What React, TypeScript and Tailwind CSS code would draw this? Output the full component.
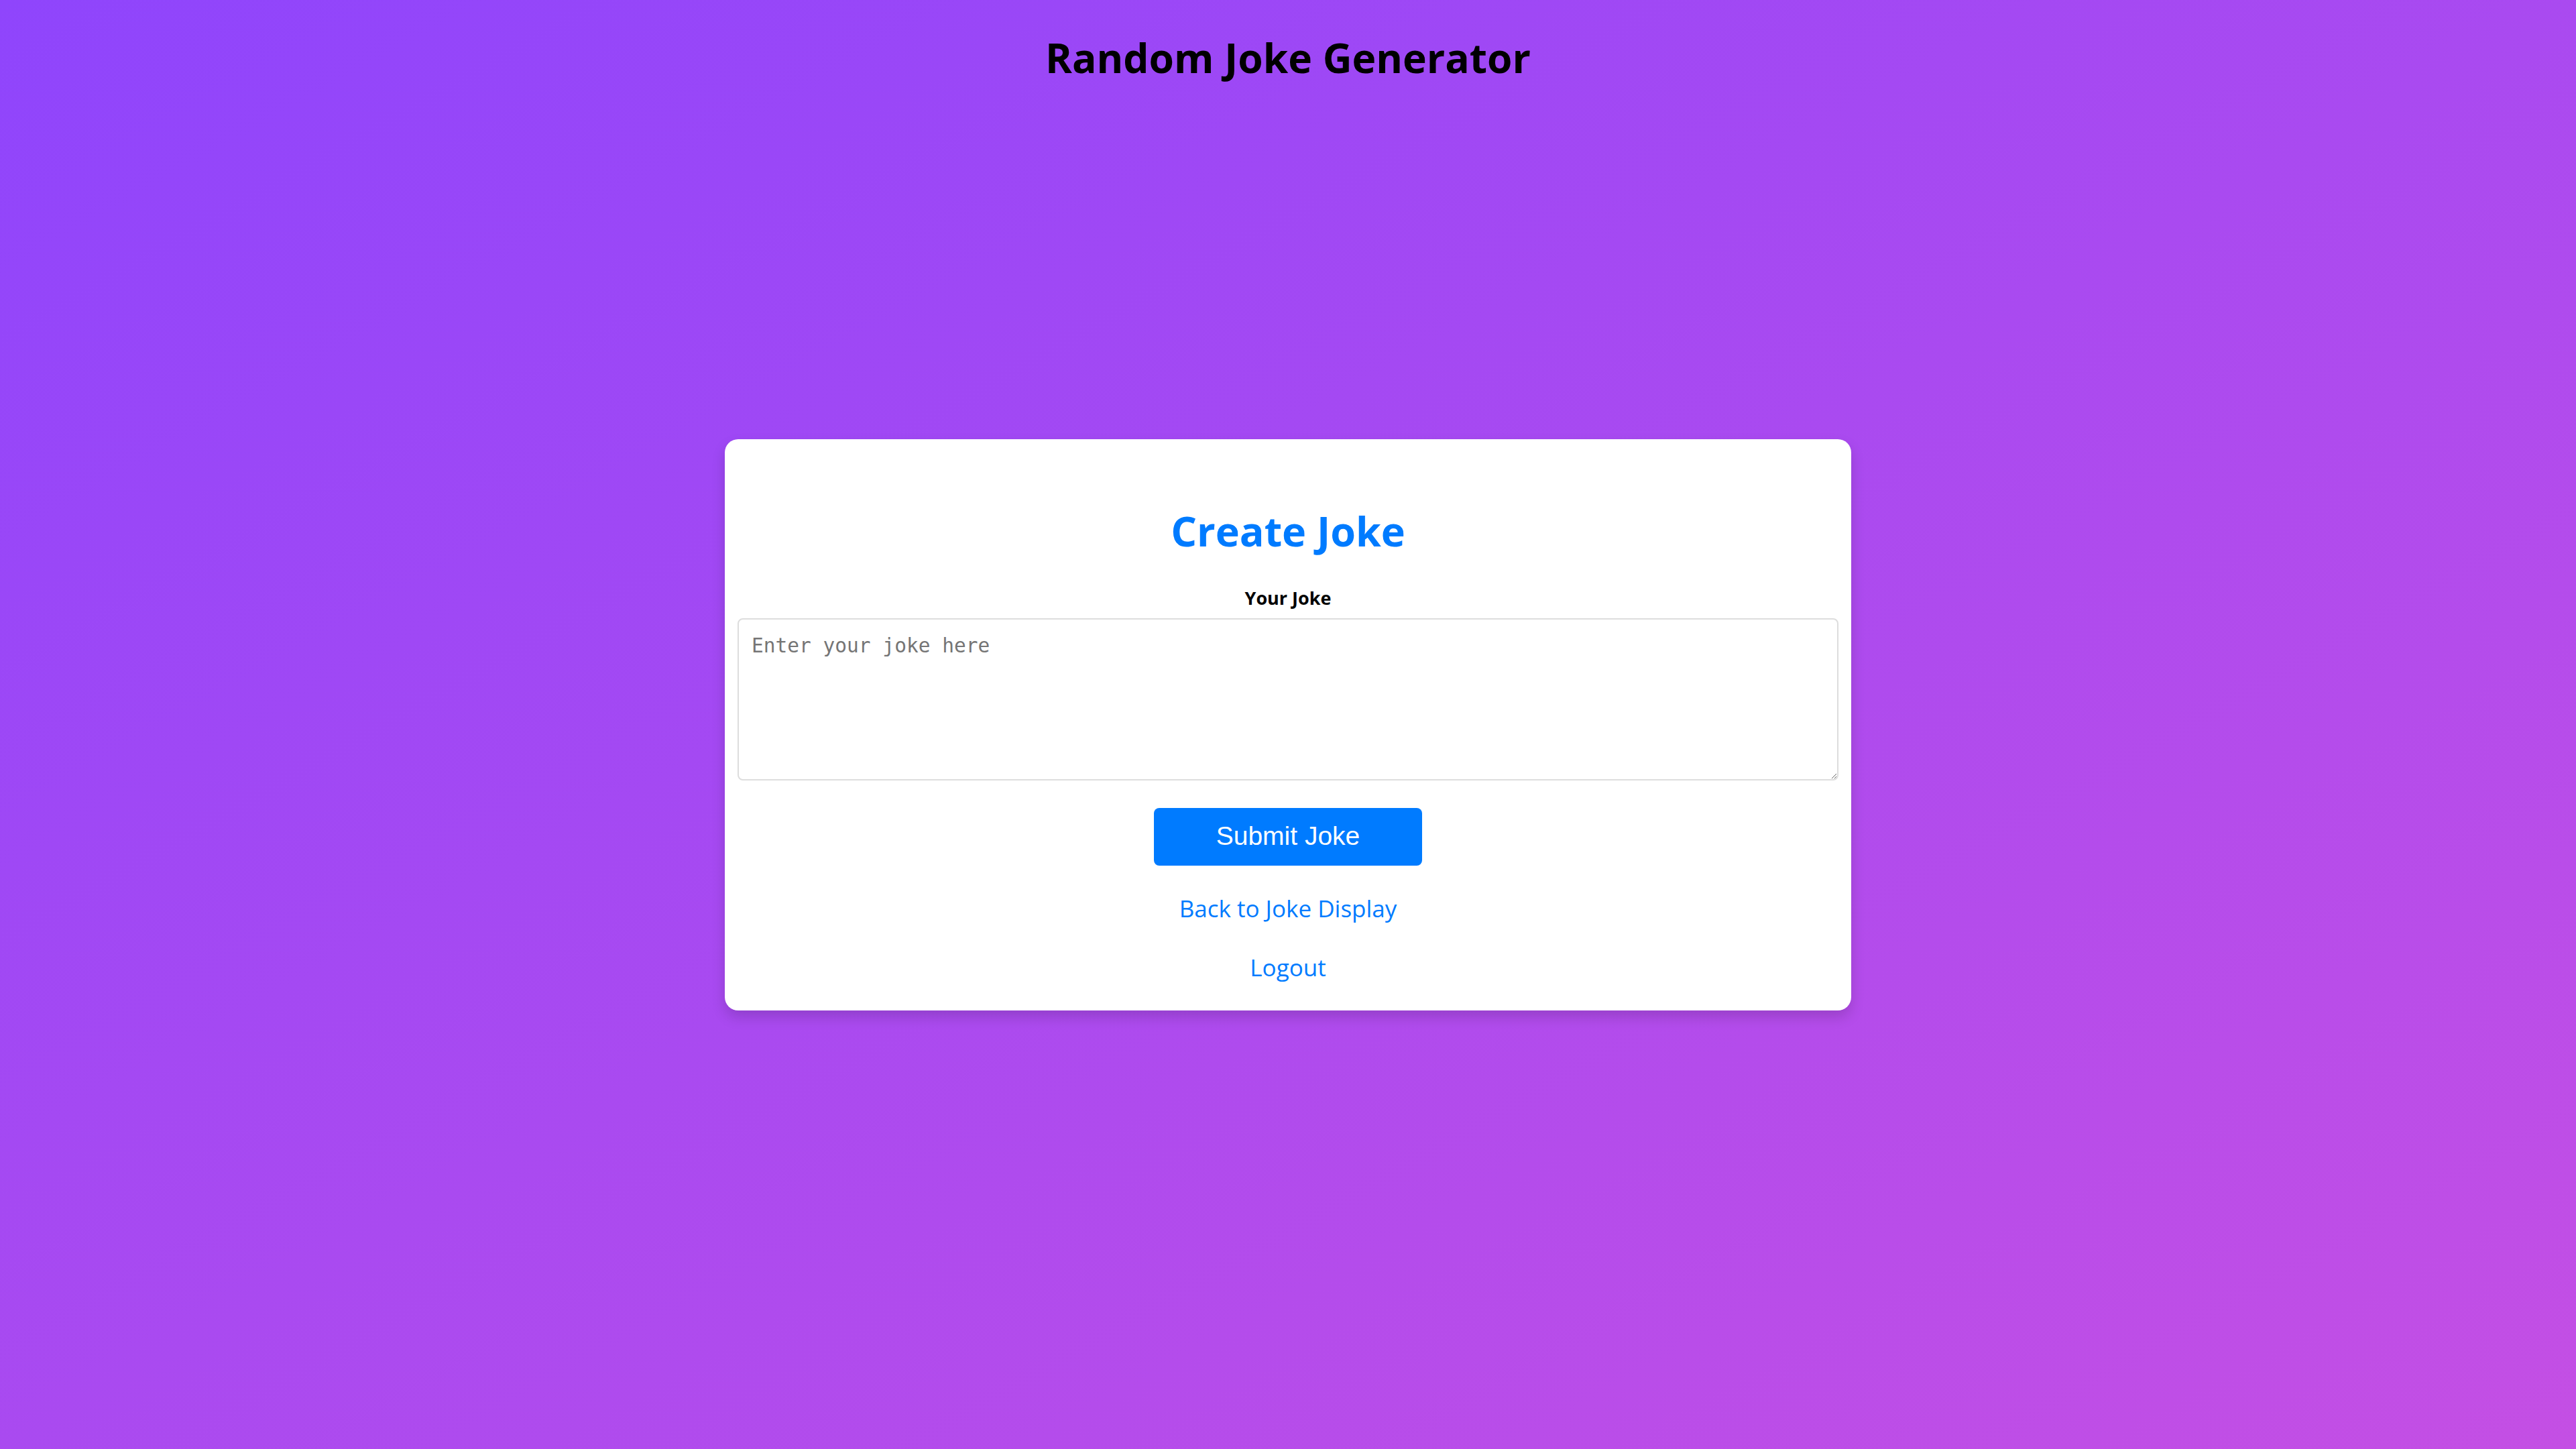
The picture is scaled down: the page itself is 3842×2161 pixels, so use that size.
import React from "react";

export default function App() {
  return (
    <div
      className="grid h-screen w-full grid-rows-[1fr_auto_1fr] bg-[linear-gradient(to_bottom_right,#8f45fc,#c44fe4)] font-['Open_Sans',sans-serif] text-black"
    >
      <header className="self-start pt-[46px] text-center">
        <h1 className="text-[60.5px] font-bold leading-[80px]">Random Joke Generator</h1>
      </header>

      <main className="flex justify-center">
        <div className="flex w-[1680px] flex-col items-center rounded-[20px] bg-white px-[19px] pt-[97px] pb-[40px] shadow-[0_10px_20px_rgba(0,0,0,0.15)]">
          <h2 className="text-[61px] font-bold leading-[80px] text-[#007bff]">Create Joke</h2>
          <label
            htmlFor="joke"
            className="mt-[42px] text-[27px] font-bold leading-[36px]"
          >
            Your Joke
          </label>
          <textarea
            id="joke"
            placeholder="Enter your joke here"
            className="mt-[12px] h-[242px] w-full rounded-[8px] border-2 border-[#dddddd] bg-white pt-[20px] pr-[19px] pb-[19px] pl-[19px] font-['DejaVu_Sans_Mono',monospace] text-[29.5px] leading-[38px] text-black outline-none placeholder:text-[#757575]"
          />
          <button
            type="button"
            className="mt-[41px] h-[86px] w-[400px] rounded-[8px] bg-[#007bff] font-['Liberation_Sans',Arial,sans-serif] text-[39px] text-white"
          >
            Submit Joke
          </button>
          <a href="#" className="mt-[40px] text-[35px] leading-[48px] text-[#007bff]">
            Back to Joke Display
          </a>
          <a href="#" className="mt-[40px] text-[35px] leading-[48px] text-[#007bff]">
            Logout
          </a>
        </div>
      </main>

      <div />
    </div>
  );
}
